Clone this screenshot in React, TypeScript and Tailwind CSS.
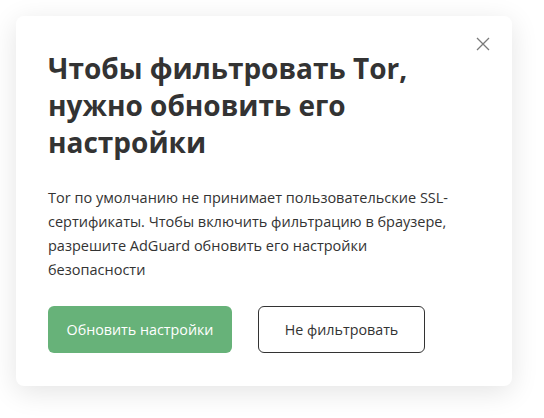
import React from "react";

export default function App() {
  return (
    <div className="w-[544px] h-[418px] bg-white p-4" style={{ fontFamily: '"Open Sans", "Noto Sans", sans-serif' }}>
      <div className="relative w-[496px] h-[370px] rounded-lg bg-white shadow-[0_6px_28px_rgba(0,0,0,0.11)] px-8 pt-[34px]">
        <button className="absolute right-[22px] top-[21px] text-[#7a7a7a]" aria-label="close">
          <svg width="14" height="14" viewBox="0 0 14 14" fill="none" stroke="currentColor" strokeWidth="1.3">
            <path d="M1 1l12 12M13 1L1 13" />
          </svg>
        </button>
        <h1 className="text-[28px] leading-[37px] font-bold text-[#333] max-w-[420px]">
          Чтобы фильтровать Tor, нужно обновить его настройки
        </h1>
        <p className="mt-[25px] text-[14.5px] leading-[24px] text-[#333] max-w-[410px]">
          Tor по умолчанию не принимает пользовательские SSL-сертификаты. Чтобы включить фильтрацию в браузере, разрешите AdGuard обновить его настройки безопасности
        </p>
        <div className="mt-[24px] flex gap-[26px]">
          <button className="h-[47px] w-[184px] rounded-md bg-[#67b279] text-white text-[14.3px]">
            Обновить настройки
          </button>
          <button className="h-[47px] w-[167px] rounded-md border border-[#333] text-[#333] text-[14.3px]">
            Не фильтровать
          </button>
        </div>
      </div>
    </div>
  );
}
